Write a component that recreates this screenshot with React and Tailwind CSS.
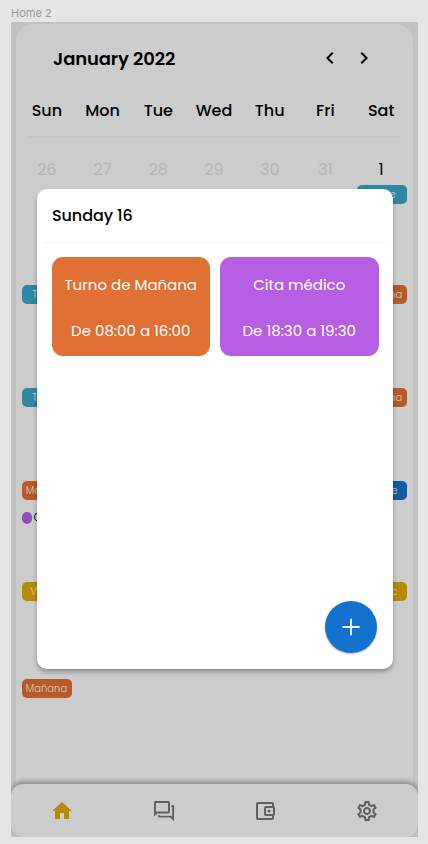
import React from "react";
import {
  MdChevronLeft,
  MdChevronRight,
  MdHome,
  MdOutlineAccountBalanceWallet,
  MdOutlineSettings,
} from "react-icons/md";

const DAYS = ["Sun", "Mon", "Tue", "Wed", "Thu", "Fri", "Sat"];

const TEAL = "bg-[#2e88a3]";
const ORANGE = "bg-[#b75a28]";
const BLUE = "bg-[#0e5ca4]";
const GOLD = "bg-[#b68b02]";

const WEEKS = [
  { height: "h-[100px]", left: null, right: { label: "Tarde", color: TEAL } },
  { height: "h-[103px]", left: { label: "Tarde", color: TEAL }, right: { label: "Mañana", color: ORANGE } },
  { height: "h-[93px]", left: { label: "Tarde", color: TEAL }, right: { label: "Mañana", color: ORANGE } },
  { height: "h-[101px]", left: { label: "Mañana", color: ORANGE }, right: { label: "Noche", color: BLUE }, note: "Cita" },
  { height: "h-[97px]", left: { label: "Vacac", color: GOLD }, right: { label: "Vacac", color: GOLD } },
  { height: "h-[40px]", left: { label: "Mañana", color: ORANGE }, right: null },
];

function Chip({ shift }) {
  if (!shift) return <span />;
  return (
    <span className={`flex h-[19px] w-[50px] items-center justify-center rounded-[5px] text-[10px] font-light text-[#d0d0d0] ${shift.color}`}>
      {shift.label}
    </span>
  );
}

function Event({ title, time, color }) {
  return (
    <div className={`flex h-[99px] flex-1 flex-col items-center justify-between whitespace-nowrap rounded-[11px] pt-[17px] pb-[14.5px] text-[15px] leading-[22px] text-white ${color}`}>
      <span>{title}</span>
      <span>{time}</span>
    </div>
  );
}

function ChatIcon() {
  return (
    <svg width="24" height="24" viewBox="0 0 24 24" fill="none" stroke="currentColor" strokeWidth="1.9">
      <path d="M3 15.2V3.7c0-.4.3-.7.7-.7h12.6c.4 0 .7.3.7.7v9.1c0 .4-.3.7-.7.7H4.8z" />
      <path d="M19.5 7h1.6v13L18.6 17.6H7.7c-.4 0-.7-.3-.7-.7v-.6" />
    </svg>
  );
}

export default function App() {
  return (
    <div className="h-[844px] w-[428px] overflow-hidden bg-[#e5e5e5] font-['Poppins','Inter',sans-serif] text-black">
      <div className="flex h-[22px] items-center pt-1 pl-[11px] font-['Inter',sans-serif] text-[11px] text-[#999999]">
        Home 2
      </div>
      <div className="relative ml-[11px] flex h-[815px] w-[407px] flex-col overflow-hidden bg-[#c2c2c2]">
        <section className="mx-[5px] mt-[2px] flex h-[772px] shrink-0 flex-col rounded-t-[18px] bg-[#cccccc] px-[3px]">
          <header className="flex h-[68px] items-center justify-between pr-[34px] pl-[34px]">
            <h1 className="text-[18px] font-semibold tracking-[-0.12px]">January 2022</h1>
            <div className="flex gap-[10px]">
              <MdChevronLeft size={24} />
              <MdChevronRight size={24} />
            </div>
          </header>
          <div className="grid h-[42px] grid-cols-7 items-center pr-[1px] pb-[5px] text-center text-[16px] font-medium">
            {DAYS.map((d) => (
              <span key={d}>{d}</span>
            ))}
          </div>
          <div className="mx-[9px] mt-[2px] h-[1.5px] shrink-0 bg-[#c6c6c6]" />
          <div className="mt-[18.5px] grid h-[26px] grid-cols-7 items-center pt-[1px] pr-[1px] text-center text-[16px] text-[#b5b5b5]">
            {[26, 27, 28, 29, 30, 31].map((n) => (
              <span key={n}>{n}</span>
            ))}
            <span className="text-black">1</span>
          </div>
          <div className="mt-[3px] pr-[3.5px] pl-[2.5px]">
            {WEEKS.map((week, i) => (
              <div key={i} className={week.height}>
                <div className="flex justify-between">
                  <Chip shift={week.left} />
                  <Chip shift={week.right} />
                </div>
                {week.note && (
                  <div className="mt-[11px] flex items-center gap-[2px] text-[10px] leading-[13px]">
                    <span className="h-[12px] w-[10px] rounded-full bg-[#944cb9]" />
                    {week.note}
                  </div>
                )}
              </div>
            ))}
          </div>
        </section>

        <nav className="relative -mt-[12px] grid h-[53px] shrink-0 grid-cols-4 place-items-center rounded-[12px] bg-[#cccccc] text-[#606060] shadow-[0_-3px_4px_rgba(0,0,0,0.3)]">
          <MdHome size={24} className="text-[#b68b02]" />
          <ChatIcon />
          <MdOutlineAccountBalanceWallet size={24} />
          <MdOutlineSettings size={24} />
        </nav>

        <div className="absolute top-[167px] left-[26px] flex h-[480px] w-[356px] flex-col rounded-[10px] bg-white shadow-[0_3px_4px_rgba(0,0,0,0.3)]">
          <h2 className="flex h-[52px] items-center pt-[2px] pl-[15px] text-[16px] font-medium tracking-[-0.1px]">Sunday 16</h2>
          <div className="mx-[7px] mt-[0.5px] h-[1.5px] bg-[#f5f5f5]" />
          <div className="mt-[14px] flex gap-[10px] pr-[14.5px] pl-[14.5px]">
            <Event title="Turno de Mañana" time="De 08:00 a 16:00" color="bg-[#e07034]" />
            <Event title="Cita médico" time="De 18:30 a 19:30" color="bg-[#b75fe3]" />
          </div>
          <button className="mt-auto mr-[16.5px] mb-[16px] flex size-[52px] items-center justify-center self-end rounded-full bg-[#1472cf] text-white shadow-[0_1px_2px_rgba(0,0,0,0.3)]">
            <svg width="18" height="18" viewBox="0 0 18 18" fill="none" stroke="currentColor" strokeWidth="1.8">
              <path d="M9 .8v16.4M.5 9h17" />
            </svg>
          </button>
        </div>
      </div>
    </div>
  );
}
